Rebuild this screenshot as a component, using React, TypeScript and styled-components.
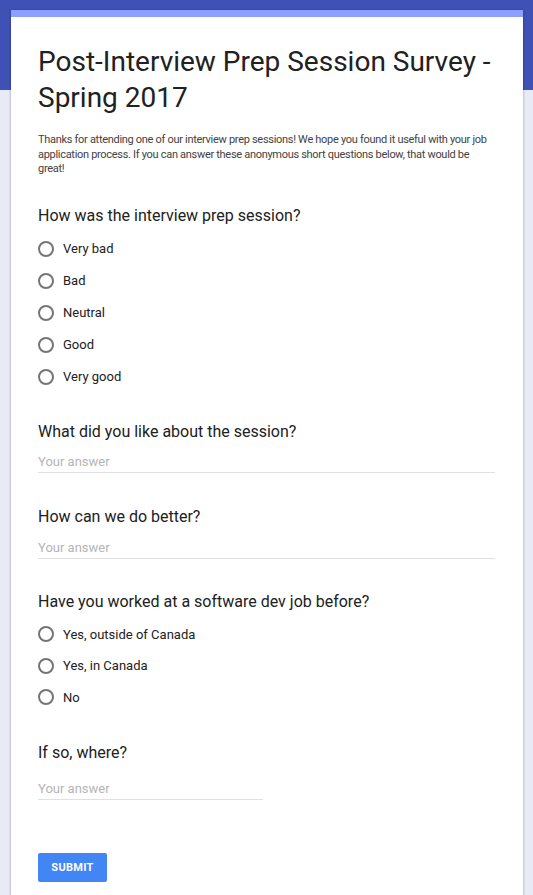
import React from "react";
import styled, { createGlobalStyle } from "styled-components";

const Global = createGlobalStyle`
  html, body { margin: 0; padding: 0; }
  body {
    background: #e8eaf6;
    font-family: Roboto, "Noto Sans", Arial, sans-serif;
    color: #212121;
  }
`;

const Page = styled.div`
  min-height: 895px;
  background: linear-gradient(#3f51b5 0, #3f51b5 90px, #e8eaf6 90px);
  padding: 10px 10px 0 11px;
  box-sizing: border-box;
`;

const Card = styled.div`
  background: #fff;
  border-top: 7px solid #8c9eff;
  box-shadow: 0 0 2px rgba(0, 0, 0, 0.25), 0 2px 3px rgba(0, 0, 0, 0.15);
  padding: 27px 28px 20px 27px;
  min-height: 870px;
  box-sizing: border-box;
`;

const Title = styled.h1`
  margin: 0;
  font-size: 28px;
  font-weight: 400;
  line-height: 36px;
  color: #212121;
`;

const Description = styled.p`
  margin: 17px 0 0;
  font-size: 11px;
  line-height: 14.5px;
  color: #424242;
  letter-spacing: -0.3px;
`;

const Question = styled.div<{ $gap: number }>`
  margin-top: ${(p) => p.$gap}px;
`;

const QTitle = styled.div`
  font-size: 16px;
  line-height: 24px;
  color: #212121;
`;

const Options = styled.div`
  margin-top: 5px;
  display: flex;
  flex-direction: column;
`;

const Option = styled.label<{ $h: number }>`
  display: flex;
  align-items: center;
  height: ${(p) => p.$h}px;
  font-size: 13px;
  color: #212121;
`;

const Circle = styled.span`
  width: 12px;
  height: 12px;
  border: 2px solid #757575;
  border-radius: 50%;
  margin-right: 9px;
  flex: none;
`;

const Input = styled.div<{ $w: string; $mt: number }>`
  width: ${(p) => p.$w};
  margin-top: ${(p) => p.$mt}px;
  border-bottom: 1px solid #e0e0e0;
  font-size: 13px;
  line-height: 20px;
  padding-bottom: 0;
  color: #b5b5b5;
`;

const Submit = styled.button`
  margin-top: 53px;
  width: 69px;
  height: 29px;
  border: none;
  border-radius: 2px;
  background: #4285f4;
  color: #fff;
  font-family: Roboto, Arial, sans-serif;
  font-size: 11px;
  font-weight: 700;
  letter-spacing: 0.3px;
  padding: 0;
`;

const Radio = ({ options, h }: { options: string[]; h: number }) => (
  <Options>
    {options.map((o) => (
      <Option key={o} $h={h}>
        <Circle />
        {o}
      </Option>
    ))}
  </Options>
);

export default function App() {
  return (
    <>
      <Global />
      <Page>
        <Card>
          <Title>Post-Interview Prep Session Survey - Spring 2017</Title>
          <Description>
            Thanks for attending one of our interview prep sessions! We hope you found it useful with your job
            application process. If you can answer these anonymous short questions below, that would be
            great!
          </Description>
          <Question $gap={27}>
            <QTitle>How was the interview prep session?</QTitle>
            <Radio h={32} options={["Very bad", "Bad", "Neutral", "Good", "Very good"]} />
          </Question>
          <Question $gap={27}>
            <QTitle>What did you like about the session?</QTitle>
            <Input $w="100%" $mt={8}>Your answer</Input>
          </Question>
          <Question $gap={32}>
            <QTitle>How can we do better?</QTitle>
            <Input $w="100%" $mt={9}>Your answer</Input>
          </Question>
          <Question $gap={31}>
            <QTitle>Have you worked at a software dev job before?</QTitle>
            <Radio h={31.5} options={["Yes, outside of Canada", "Yes, in Canada", "No"]} />
          </Question>
          <Question $gap={28}>
            <QTitle>If so, where?</QTitle>
            <Input $w="225px" $mt={14}>Your answer</Input>
          </Question>
          <Submit>SUBMIT</Submit>
        </Card>
      </Page>
    </>
  );
}
